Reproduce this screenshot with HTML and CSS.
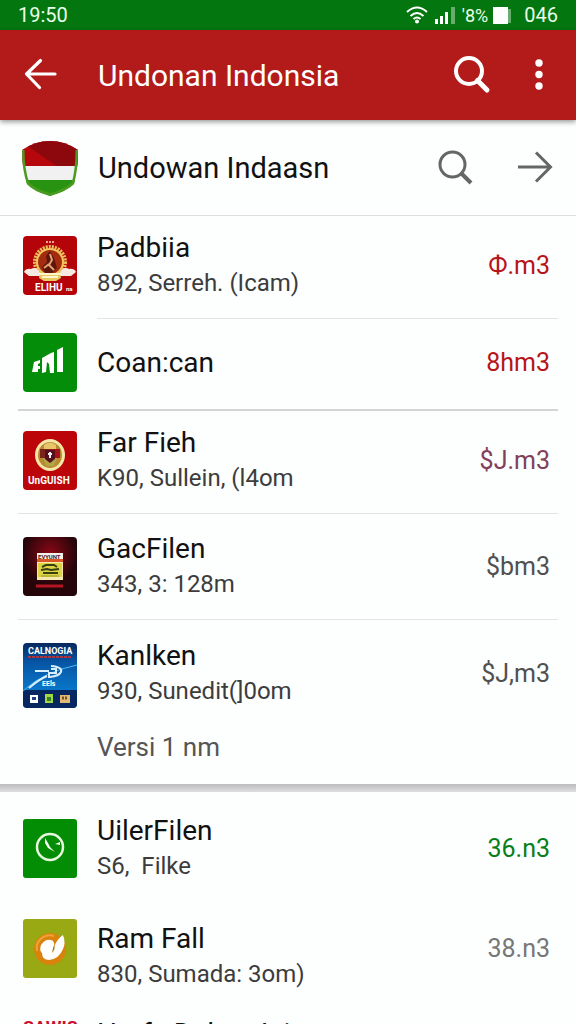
FILE: index.html
```html
<!DOCTYPE html>
<html lang="id">
  <head>
    <meta charset="UTF-8">
    <meta name="viewport" content="width=device-width, initial-scale=1">
    <title>Undonan Indonsia</title>
    <link rel="stylesheet" href="styles.css">
  </head>
  <body>
    <div class="status">
      <span class="clock">19:50</span>
      <svg class="wifi" viewBox="0 0 22 18">
        <path d="M1 6Q11 -3 21 6M4.500 10Q11 4 17.500 10M7.500 13Q11 10 14.500 13" fill="none" stroke="#fff" stroke-width="2"/>
        <circle cx="11" cy="15.500" r="2" fill="#fff"/>
      </svg>
      <svg class="signal" viewBox="0 0 22 18" fill="#fff">
        <path d="M1 13h3v5H1zM6 10h3v8H6zM11 6h3v12h-3z"/>
        <path d="M17 1h4v17h-4z" opacity=".4"/>
      </svg>
      <span class="percent">'8%</span>
      <svg class="battery" viewBox="0 0 20 18">
        <path d="M15 3h4v14h-4z" fill="#fff" opacity=".4"/>
        <path d="M1 1h15v17H1z" fill="#fff"/>
      </svg>
      <span class="count">046</span>
    </div>

    <header class="appbar">
      <button class="icon-btn" aria-label="Back">
        <svg viewBox="0 0 40 40" fill="none" stroke="#fff" stroke-width="3.200" stroke-linecap="round" stroke-linejoin="round"><path d="M35 19H7M20.500 5.500L6.500 19L19.500 32.500"/></svg>
      </button>
      <h1>Undonan Indonsia</h1>
      <button class="icon-btn" aria-label="Search">
        <svg viewBox="0 0 40 40" fill="none" stroke="#fff" stroke-width="4"><circle cx="17" cy="16" r="13"/><path d="M25.500 25.500L35 35" stroke-width="5" stroke-linecap="round"/></svg>
      </button>
      <button class="icon-btn more" aria-label="More options">
        <svg viewBox="0 0 40 40" fill="#fff"><circle cx="19" cy="8" r="3.700"/><circle cx="19" cy="19.500" r="3.700"/><circle cx="19" cy="31" r="3.700"/></svg>
      </button>
    </header>

    <main>
      <div class="team">
        <svg class="shield" viewBox="0 0 56 56">
          <clipPath id="shield"><path d="M0 10Q13 1 28 1T56 10Q56 30 52 44Q45 51 28 56Q11 51 5 44Q0 30 0 10Z"/></clipPath>
          <g clip-path="url(#shield)">
            <path d="M0 0h56v27H0z" fill="#b5070c"/>
            <path d="M4 5L14 0h42v27H36z" fill="#8d080c"/>
            <path d="M0 26h56v15H0z" fill="#f1f1f1"/>
            <path d="M0 40h56v16H0z" fill="#279310"/>
            <path d="M0 10Q0 30 5 44Q11 51 28 56Q45 51 52 44Q56 30 56 10" fill="none" stroke="#4b9b20" stroke-width="5"/>
          </g>
        </svg>
        <h2>Undowan Indaasn</h2>
        <button class="icon-btn" aria-label="Search team">
          <svg viewBox="0 0 40 40" fill="none" stroke="#666" stroke-width="3"><circle cx="16.500" cy="16.500" r="12.500"/><path d="M26 26L35 35" stroke-width="4"/></svg>
        </button>
        <button class="icon-btn next" aria-label="Next">
          <svg viewBox="0 0 40 40" fill="none" stroke="#666" stroke-width="3"><path d="M2 19H34M20 4.500L34.500 19L20 33.500"/></svg>
        </button>
      </div>

      <ul class="list">
        <li class="row">
          <svg class="thumb" viewBox="0 0 54 59">
            <rect width="54" height="59" rx="4" fill="#b40409"/>
            <path d="M23 6h8" stroke="#e9a891" stroke-width="2" stroke-dasharray="2 1"/>
            <circle cx="27" cy="26" r="15" fill="none" stroke="#e9bd58" stroke-width="4" stroke-dasharray="2 1"/>
            <circle cx="27" cy="26" r="13" fill="#a52b10" stroke="#f0c35b" stroke-width="2"/>
            <path d="M27 15l4 7 3 10-5 5h-7l-3-6 5-5-1-6z" fill="#5d160c"/>
            <path d="M27 18l2 6-3 5 5 5M21 32l5-4" stroke="#e4a275" stroke-width="2" fill="none"/>
            <path d="M1 36q2-4 7-3 5-3 9 3l3 4H6zM53 36q-2-4-7-3-5-3-9 3l-3 4h14z" fill="#f5e9e2"/>
            <path d="M17 34q3 5 10 5t10-5l1 8-5 3H21l-5-3z" fill="#e5ca63"/>
            <path d="M19 41h16M16 38h22" stroke="#fff5cb" stroke-width="2"/>
            <text x="12" y="55" class="t10">ELIHU</text><text x="43" y="55" class="t6">na</text>
          </svg>
          <div class="info"><h3>Padbiia</h3><p>892, Serreh. (Icam)</p></div>
          <span class="price red">Ф.m3</span>
        </li>
        <li class="row full">
          <svg class="thumb" viewBox="0 0 54 59">
            <rect width="54" height="59" rx="4" fill="#048d08"/>
            <path d="M9 39l2-10 6-2v3l-2 1v2h2v3h-2v3zM19 40V25l9-5 3-1v21h-4l-1-9-2-2-1 10zM34 17l6-3v25h-6z" fill="#fff"/>
          </svg>
          <div class="info"><h3>Coan:can</h3></div>
          <span class="price red">8hm3</span>
        </li>
        <li class="row wide">
          <svg class="thumb" viewBox="0 0 54 59">
            <rect width="54" height="59" rx="4" fill="#bb0509"/>
            <ellipse cx="27" cy="24" rx="15" ry="16" fill="#f4e6a7"/>
            <ellipse cx="27" cy="24" rx="12" ry="13" fill="#b78a32"/>
            <path d="M17 18h10v9H17z" fill="#78241b"/><path d="M27 18h10v9H27z" fill="#a5121c"/>
            <path d="M21 14q6-5 12 0v4H21z" fill="#e7c568"/>
            <path d="M20 27h14l-3 8h-8z" fill="#b3a445"/>
            <path d="M22 19h10v9l-5 4-5-4z" fill="#54101d"/>
            <path d="M27 21v6M25 23h4" stroke="#eee" stroke-width="2"/>
            <text x="5" y="53" class="t10">UnGUISH</text>
          </svg>
          <div class="info"><h3>Far Fieh</h3><p>K90, Sullein, (l4om</p></div>
          <span class="price plum">$J.m3</span>
        </li>
        <li class="row wide tall">
          <svg class="thumb" viewBox="0 0 54 59">
            <defs><radialGradient id="glow" cy=".3"><stop stop-color="#8e0815"/><stop offset="1" stop-color="#25050a"/></radialGradient></defs>
            <rect width="54" height="59" rx="4" fill="url(#glow)"/>
            <path d="M14 16h26v27H14z" fill="#f5e9b0"/>
            <path d="M14 16h26v6H14z" fill="#f5f0ea"/><path d="M14 22h26v3H14z" fill="#d95824"/>
            <path d="M15 26h24v14H15z" fill="#dfd345"/>
            <text x="15" y="22" class="t6 dark">EVYUNT</text>
            <path d="M19 30l4-2h8l3 2M18 33l6-1 4 1 8-1M20 36h15" stroke="#34430d" stroke-width="2" fill="none"/>
            <path d="M18 39h18" stroke="#94982d"/>
            <path d="M13 49h27" stroke="#b51623" stroke-width="3"/>
          </svg>
          <div class="info"><h3>GacFilen</h3><p>343, 3: 128m</p></div>
          <span class="price gray">$bm3</span>
        </li>
        <li class="row last">
          <svg class="thumb poster" viewBox="0 0 54 65">
            <defs>
              <linearGradient id="sea" x2="0" y2="1"><stop stop-color="#07285d"/><stop offset=".3" stop-color="#0755a5"/><stop offset="1" stop-color="#098de0"/></linearGradient>
              <clipPath id="poster"><rect width="54" height="65" rx="4"/></clipPath>
            </defs>
            <g clip-path="url(#poster)">
              <path d="M0 0h54v65H0z" fill="url(#sea)"/>
              <path d="M0 47h54v18H0z" fill="#06275f"/>
              <path d="M0 48Q20 29 54 22" stroke="#4db9ec" fill="none"/>
              <text x="5" y="11" class="t9">CALNOGIA</text>
              <path d="M5 14h43" stroke="#a93846" stroke-width="2" stroke-dasharray="3 1"/>
              <path d="M12 28h14M28 23q12 1 10 6-2 4-11 5M28 26h5v4h-7v5M6 45q9-8 18-12" stroke="#d9efff" stroke-width="2" fill="none"/>
              <text x="19" y="43" class="t7">EEls</text>
              <path d="M7 52h8v8H7z" fill="#fff"/><path d="M9 54h4v3H9z" fill="#233e87"/>
              <path d="M22 51h8v9h-8z" fill="#a1d844"/><path d="M24 54h4v4h-4z" fill="#398226"/>
              <path d="M37 52h10v8H37z" fill="#e2ba76"/><path d="M39 55h6" stroke="#775329" stroke-width="3" stroke-dasharray="2 1"/>
            </g>
          </svg>
          <div class="info"><h3>Kanlken</h3><p>930, Sunedit(]0om</p></div>
          <span class="price gray">$J,m3</span>
        </li>
      </ul>
      <p class="version">Versi 1 nm</p>

      <ul class="list more-list">
        <li class="row">
          <svg class="thumb" viewBox="0 0 54 59">
            <rect width="54" height="59" rx="3" fill="#038d05"/>
            <circle cx="27" cy="28" r="13" fill="none" stroke="#e7f8df" stroke-width="2.500"/>
            <path d="M22 19l3 5 2 4 5 5-7-4-3-5zM32 25l5-2v3z" fill="#f4fff0"/>
          </svg>
          <div class="info"><h3>UilerFilen</h3><p>S6,&nbsp; Filke</p></div>
          <span class="price green">36.n3</span>
        </li>
        <li class="row top">
          <svg class="thumb" viewBox="0 0 54 59">
            <rect width="54" height="59" rx="3" fill="#98a913"/>
            <circle cx="27" cy="30" r="16" fill="#d9820c"/>
            <path d="M14 32a13 13 0 0 1 17-15" fill="none" stroke="#efa33a" stroke-width="2"/>
            <path d="M18 26q4-6 10-5 4 1 3 7 3-8 9-12 3 8 0 14-4 10-14 11-7 0-7-7-3-3-1-8z" fill="#fff"/>
            <path d="M31 26q2 4-2 8l1-5z" fill="#a7800d"/>
          </svg>
          <div class="info"><h3>Ram Fall</h3><p>830, Sumada: 3om)</p></div>
          <span class="price light">38.n3</span>
        </li>
        <li class="row top">
          <span class="brand">SAWIS</span>
          <div class="info"><h3>Harfa Daban Iai</h3></div>
        </li>
      </ul>
    </main>
  </body>
</html>
```
FILE: styles.css
```css
* { box-sizing: border-box; }
body {
  display: flex;
  flex-direction: column;
  height: 100vh;
  margin: 0;
  overflow: hidden;
  background: #fdfefe;
  color: #111;
  font-family: Roboto, sans-serif;
}
h1, h2, h3, p, ul { margin: 0; padding: 0; font-weight: 400; }
ul { list-style: none; }
svg { display: block; flex: none; }

.status {
  display: flex;
  flex: none;
  align-items: center;
  height: 30px;
  padding: 0 18px;
  background: #04760f;
  color: #e9ffe9;
  font-size: 20px;
}
.clock { flex: 1; }
.wifi, .signal { width: 22px; height: 18px; margin-right: 6px; }
.percent { font-size: 18px; }
.battery { width: 20px; height: 18px; margin: 0 12px 0 4px; }

.appbar {
  position: relative;
  display: flex;
  flex: none;
  align-items: center;
  height: 90px;
  padding: 0 16px 0 20px;
  background: #b31b1b;
  color: #fff;
  box-shadow: 0 2px 5px rgba(0, 0, 0, .4);
}
.icon-btn {
  flex: none;
  width: 40px;
  height: 40px;
  padding: 0;
  border: 0;
  background: none;
  cursor: pointer;
}
h1, h2 { flex: 1; font-size: 30px; white-space: nowrap; }
h1 { margin-left: 38px; }
.more { margin-left: 28px; }

main { flex: 1; overflow: auto; scrollbar-width: none; }
.team {
  display: flex;
  align-items: center;
  height: 96px;
  padding: 0 20px 0 22px;
  border-bottom: 1px solid #ddd;
}
.shield { width: 56px; height: 56px; }
h2 { margin-left: 20px; font-size: 29px; }
.next { margin-left: 40px; }

.row {
  position: relative;
  display: flex;
  align-items: center;
  margin: 0 18px;
  padding: 14px 8px 19px 5px;
}
/* divider, starts at the text unless the row is wide */
.row::after {
  content: "";
  position: absolute;
  right: 0;
  bottom: 0;
  left: 79px;
  height: 1px;
  background: #e4e4e4;
}
.wide::after, .full::after { left: 0; }
.full::after { height: 2px; background: #d2d5d5; }
.tall { padding-top: 17px; }
.last { padding: 18px 8px 0 5px; }
.last::after, .more-list .row::after { display: none; }
.thumb { width: 54px; height: 59px; }
.poster { align-self: flex-end; height: 65px; }
.info { flex: 1; margin-left: 20px; white-space: nowrap; }
h3 { font-size: 28px; line-height: 36px; }
.info p { color: #3c3c3c; font-size: 24px; line-height: 34px; }
.price { font-size: 25px; }
.red { color: #b71519; }
.plum { color: #83405a; }
.gray { color: #505050; }
.green { color: #087f1b; }
.light { color: #777; }

.version {
  padding: 22px 18px 20px 97px;
  color: #555;
  font-size: 26px;
  line-height: 34px;
}
.more-list {
  padding-top: 15px;
  background: linear-gradient(#bcbcbe, #dededf) no-repeat top / 100% 8px;
}
.top { align-items: flex-start; padding: 17px 8px 6px 5px; }
.top .info { padding-top: 2px; }
.top .price { line-height: 60px; }
.brand {
  width: 54px;
  color: #c8102e;
  font-size: 18px;
  font-weight: 700;
  line-height: 28px;
}

/* lettering on the thumbnails */
svg text { fill: #fff; font-weight: 700; }
.t10 { font-size: 10px; }
.t9 { font-size: 9px; }
.t7 { font-size: 7px; }
.t6 { font-size: 6px; }
svg .dark { fill: #541a18; }
```
